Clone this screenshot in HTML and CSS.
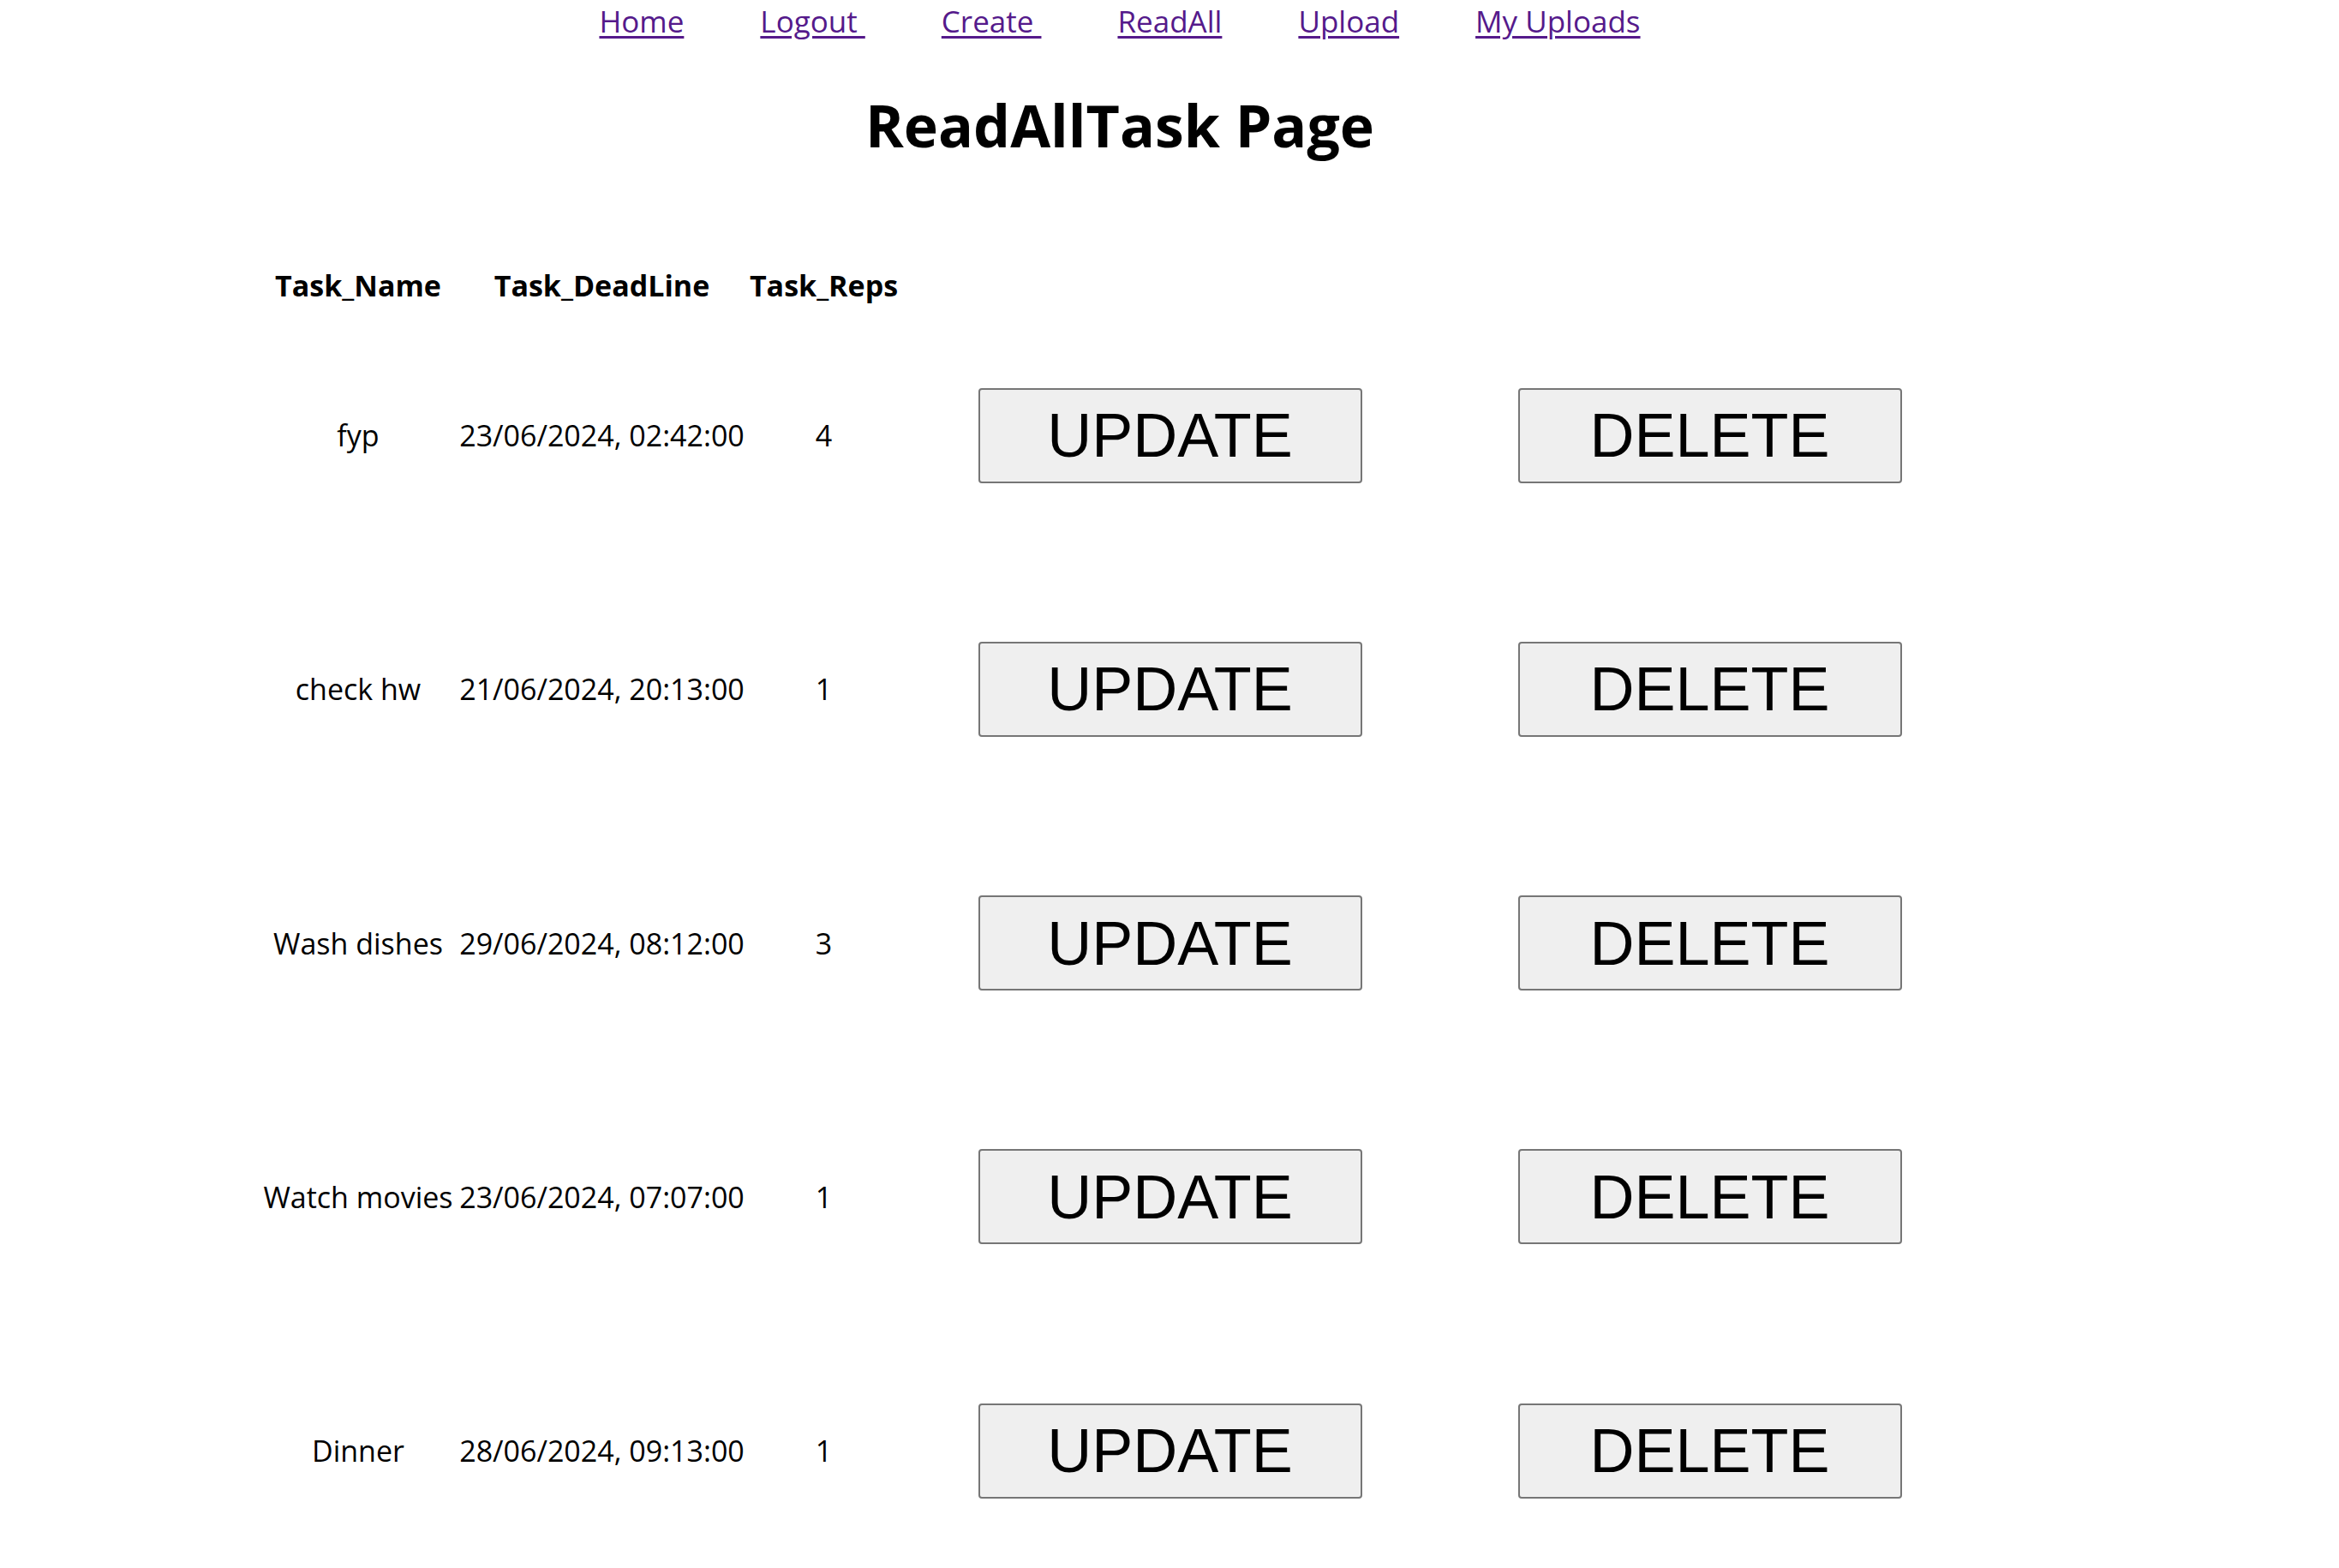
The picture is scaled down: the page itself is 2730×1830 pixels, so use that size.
FILE: index.html
```html
<!DOCTYPE html>
<html lang="en">
<head>
<meta charset="utf-8">
<title>ReadAllTask Page</title>
<link rel="stylesheet" href="styles.css">
</head>
<body>
<div class="page">
  <nav class="nav">
    <a href="#">Home</a>
    <a href="#">Logout&nbsp;</a>
    <a href="#">Create&nbsp;</a>
    <a href="#">ReadAll</a>
    <a href="#">Upload</a>
    <a href="#">My Uploads</a>
  </nav>
  <h1 class="title">ReadAllTask Page</h1>
  <div class="tasks">
    <div class="th">Task_Name</div>
    <div class="th">Task_DeadLine</div>
    <div class="th">Task_Reps</div>
    <div class="th"></div>
    <div class="th"></div>

    <div class="td">fyp</div>
    <div class="td">23/06/2024, 02:42:00</div>
    <div class="td">4</div>
    <div class="td"><button class="btn">UPDATE</button></div>
    <div class="td"><button class="btn">DELETE</button></div>

    <div class="td">check hw</div>
    <div class="td">21/06/2024, 20:13:00</div>
    <div class="td">1</div>
    <div class="td"><button class="btn">UPDATE</button></div>
    <div class="td"><button class="btn">DELETE</button></div>

    <div class="td">Wash dishes</div>
    <div class="td">29/06/2024, 08:12:00</div>
    <div class="td">3</div>
    <div class="td"><button class="btn">UPDATE</button></div>
    <div class="td"><button class="btn">DELETE</button></div>

    <div class="td">Watch movies</div>
    <div class="td">23/06/2024, 07:07:00</div>
    <div class="td">1</div>
    <div class="td"><button class="btn">UPDATE</button></div>
    <div class="td"><button class="btn">DELETE</button></div>

    <div class="td">Dinner</div>
    <div class="td">28/06/2024, 09:13:00</div>
    <div class="td">1</div>
    <div class="td"><button class="btn">UPDATE</button></div>
    <div class="td"><button class="btn">DELETE</button></div>
  </div>
</div>
</body>
</html>
```
FILE: styles.css
```css
html, body {
  margin: 0;
  padding: 0;
  background: #ffffff;
}

body {
  font-family: "Open Sans", "Noto Sans", sans-serif;
  color: #000000;
}

.page {
  width: 2614px;
}

.nav {
  display: flex;
  justify-content: center;
  gap: 89px;
  padding-top: 1px;
  font-size: 35px;
  line-height: 47px;
}

.nav a {
  color: #551a8b;
  text-decoration: underline;
  text-decoration-thickness: 3px;
  text-underline-offset: 4px;
}

.title {
  margin: 52px 0 0;
  text-align: center;
  font-size: 68px;
  line-height: 92px;
  font-weight: 700;
}

.tasks {
  display: grid;
  grid-template-columns: 229px 340px 178px 630px 630px;
  grid-template-rows: 50px repeat(5, 296.25px);
  justify-content: center;
  margin-top: 118px;
}

.th {
  font-size: 34px;
  line-height: 46px;
  font-weight: 700;
  text-align: center;
  white-space: nowrap;
}

.td {
  display: flex;
  align-items: center;
  justify-content: center;
  font-size: 34px;
  line-height: 46px;
  white-space: nowrap;
}

.btn {
  width: 448px;
  height: 111px;
  margin: 0;
  padding: 0;
  font-family: "Liberation Sans", Arial, sans-serif;
  font-size: 72px;
  color: #000000;
  background: #efefef;
  border: 2px solid #767676;
  border-radius: 4px;
}
```
